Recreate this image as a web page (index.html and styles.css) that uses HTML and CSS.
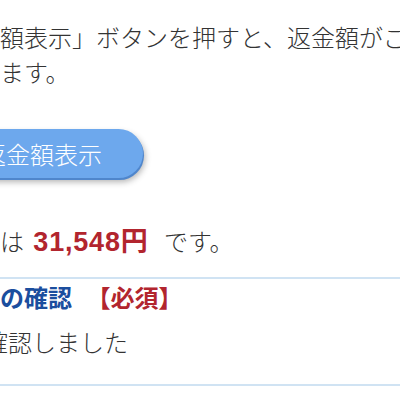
FILE: index.html
```html
<!DOCTYPE html>
<html lang="ja">
<head>
<meta charset="utf-8">
<link rel="stylesheet" href="styles.css">
</head>
<body>
<div class="page">
  <p class="intro">額表示」ボタンを押すと、返金額がご確認いただけ<br>ます。</p>
  <div class="btn-row"><button class="calc-btn" type="button">返金額表示</button></div>
  <p class="amount">は <strong class="price"><span class="num">31,548</span>円</strong> です。</p>
  <section class="confirm">
    <h3 class="confirm-title">の確認 <span class="required">【必須】</span></h3>
    <label class="check">確認しました</label>
  </section>
  <div class="next"></div>
</div>
</body>
</html>
```
FILE: styles.css
```css
html, body {
  margin: 0;
  padding: 0;
  background: #ffffff;
}
body {
  width: 400px;
  height: 400px;
  overflow: hidden;
  font-family: "Noto Sans CJK JP", "Noto Sans", sans-serif;
  font-weight: 300;
  color: #333333;
}
.page {
  width: 400px;
}
.intro {
  margin: 0;
  padding-top: 19px;
  font-size: 24px;
  line-height: 35px;
  white-space: nowrap;
}
.btn-row {
  margin-top: 40px;
  height: 49px;
}
.calc-btn {
  margin-left: -61px;
  height: 49px;
  padding: 0 41px 0 43px;
  border: none;
  border-radius: 25px;
  background: #6da8ed;
  color: #ffffff;
  font-family: inherit;
  font-weight: 300;
  font-size: 24px;
  line-height: 49px;
  white-space: nowrap;
  box-shadow: 1px 2px 0 #4f86cc, 2px 4px 6px rgba(0, 0, 0, 0.3);
}
.amount {
  margin: 44px 0 0;
  font-size: 24px;
  line-height: 35px;
  white-space: nowrap;
}
.price {
  color: #b2252e;
  font-size: 27px;
  font-weight: 700;
  margin: 0 11px 0 4px;
}
.num {
  font-family: "Liberation Sans", "Noto Sans CJK JP", sans-serif;
  letter-spacing: 0.8px;
}
.confirm {
  margin-top: 17px;
  border-top: 2px solid #d0e3f3;
  padding-bottom: 25px;
}
.confirm-title {
  margin: 0;
  font-size: 24px;
  line-height: 35px;
  font-weight: 700;
  color: #1b4e9e;
  white-space: nowrap;
}
.required {
  color: #b2252e;
  margin-left: 9px;
}
.check {
  display: block;
  margin: 10px 0 0 -16px;
  font-size: 24px;
  line-height: 35px;
  white-space: nowrap;
}
.next {
  border-top: 2px solid #d0e3f3;
  height: 20px;
}
```
